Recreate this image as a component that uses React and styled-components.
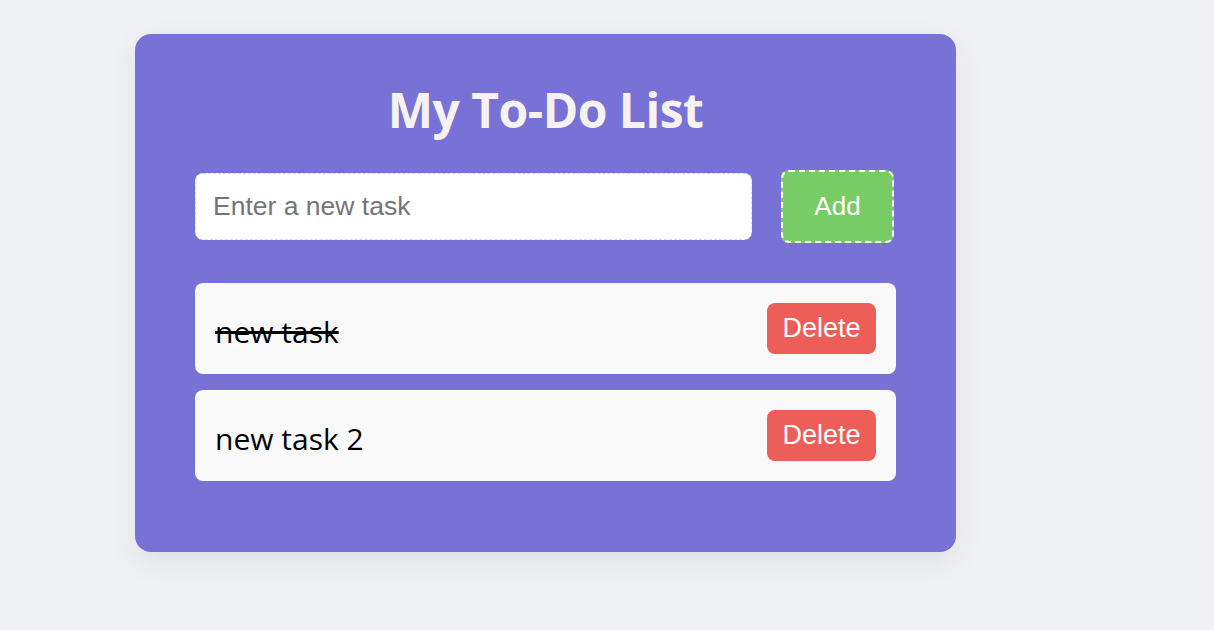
import { useState } from "react";
import styled, { createGlobalStyle } from "styled-components";

const initialTasks = [
  { id: 1, text: "new task", done: true },
  { id: 2, text: "new task 2", done: false },
];

export default function App() {
  const [tasks, setTasks] = useState(initialTasks);
  const [value, setValue] = useState("");

  const addTask = () => {
    if (!value.trim()) return;
    setTasks(prev => [...prev, { id: Date.now(), text: value.trim(), done: false }]);
    setValue("");
  };

  const toggle = id =>
    setTasks(prev => prev.map(t => (t.id === id ? { ...t, done: !t.done } : t)));

  const remove = id => setTasks(prev => prev.filter(t => t.id !== id));

  return (
    <>
      <GlobalStyle />
      <Page>
        <Card>
          <Title>My To-Do List</Title>
          <FormRow>
            <TaskInput
              value={value}
              onChange={e => setValue(e.target.value)}
              onKeyDown={e => e.key === "Enter" && addTask()}
              placeholder="Enter a new task"
            />
            <AddButton onClick={addTask}>Add</AddButton>
          </FormRow>
          <TaskList>
            {tasks.map(task => (
              <TaskItem key={task.id}>
                <TaskText $done={task.done} onClick={() => toggle(task.id)}>
                  {task.text}
                </TaskText>
                <DeleteButton onClick={() => remove(task.id)}>Delete</DeleteButton>
              </TaskItem>
            ))}
          </TaskList>
        </Card>
      </Page>
    </>
  );
}

// ======= STYLED COMPONENTS ======= //

const GlobalStyle = createGlobalStyle`
  * {
    box-sizing: border-box;
  }

  body {
    margin: 0;
    background: #f0f1f5;
    font-family: "Open Sans", "Noto Sans", sans-serif;
  }
`;

const Page = styled.div`
  min-height: 630px;
  padding: 34px 0 0 135px;
`;

const Card = styled.div`
  width: 821px;
  height: 518px;
  padding: 46px 60px 0;
  background: #7872d6;
  border-radius: 16px;
  box-shadow: 0 10px 30px rgba(0, 0, 0, 0.07);
`;

const Title = styled.h1`
  margin: 0 0 30px;
  text-align: center;
  font-size: 48px;
  font-weight: 700;
  line-height: 60px;
  letter-spacing: -0.5px;
  color: #f7f2f2;
`;

const FormRow = styled.div`
  display: flex;
  align-items: center;
  gap: 29px;
  width: 699px;
  margin-bottom: 40px;
`;

const TaskInput = styled.input`
  flex: 1;
  height: 67px;
  padding: 0 17px;
  border: 1px dashed #d9d7ee;
  border-radius: 8px;
  background: #ffffff;
  font-family: "Liberation Sans", Arial, sans-serif;
  font-size: 26.5px;
  color: #222;
  outline: none;

  &::placeholder {
    color: #757575;
  }
`;

const AddButton = styled.button`
  width: 113px;
  height: 73px;
  border: 2px dashed #ffffff;
  border-radius: 8px;
  background: #77cc66;
  color: #ffffff;
  font-family: "Liberation Sans", Arial, sans-serif;
  font-size: 26px;
  cursor: pointer;
`;

const TaskList = styled.ul`
  list-style: none;
  margin: 0;
  padding: 0;
  display: flex;
  flex-direction: column;
  gap: 16px;
`;

const TaskItem = styled.li`
  display: flex;
  align-items: center;
  justify-content: space-between;
  height: 91px;
  padding: 0 20px;
  background: #f9f9f9;
  border-radius: 8px;
`;

const TaskText = styled.span`
  font-size: 30px;
  color: #000;
  cursor: pointer;
  margin-top: 6px;
  text-decoration: ${props => (props.$done ? "line-through" : "none")};
  text-decoration-thickness: 3px;
`;

const DeleteButton = styled.button`
  width: 109px;
  height: 51px;
  border: none;
  border-radius: 8px;
  background: #ed5e59;
  color: #ffffff;
  font-family: "Liberation Sans", Arial, sans-serif;
  font-size: 27px;
  cursor: pointer;
`;
